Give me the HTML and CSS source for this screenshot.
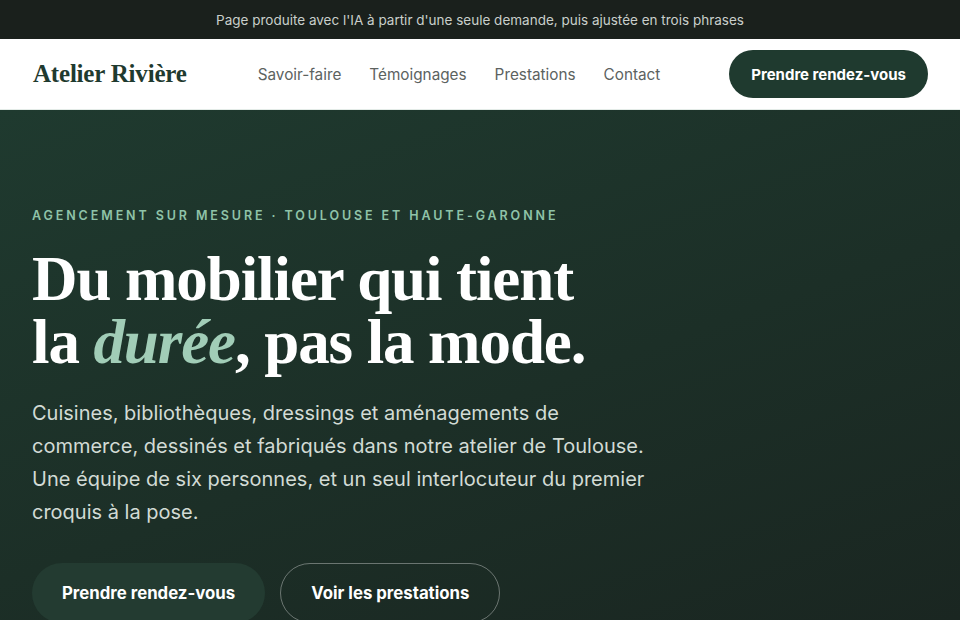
FILE: index.html
```html
<!DOCTYPE html>
<html lang="fr">
<head>
  <meta charset="utf-8">
  <title>Atelier Rivière — Agencement sur mesure</title>
  <link rel="stylesheet" href="styles.css">
</head>
<body>
  <div class="notice">Page produite avec l'IA à partir d'une seule demande, puis ajustée en trois phrases</div>

  <header class="topbar">
    <a class="logo" href="#">Atelier Rivière</a>
    <nav class="nav">
      <a href="#savoir-faire">Savoir-faire</a>
      <a href="#temoignages">Témoignages</a>
      <a href="#prestations">Prestations</a>
      <a href="#contact">Contact</a>
    </nav>
    <a class="btn btn-dark" href="#rdv">Prendre rendez-vous</a>
  </header>

  <section class="hero">
    <p class="eyebrow">Agencement sur mesure · Toulouse et Haute-Garonne</p>
    <h1>Du mobilier qui tient<br>la <em>durée</em>, pas la mode.</h1>
    <p class="lead">Cuisines, bibliothèques, dressings et aménagements de commerce, dessinés et fabriqués dans notre atelier de Toulouse. Une équipe de six personnes, et un seul interlocuteur du premier croquis à la pose.</p>
    <div class="actions">
      <a class="btn btn-soft" href="#rdv">Prendre rendez-vous</a>
      <a class="btn btn-ghost" href="#prestations">Voir les prestations</a>
    </div>
  </section>
</body>
</html>
```

FILE: styles.css
```css
* {
  box-sizing: border-box;
}

body {
  margin: 0;
  font-family: Inter, "Noto Sans", sans-serif;
  background: #1c2b24;
  color: #1f3a2f;
}

a {
  text-decoration: none;
  color: inherit;
}

.notice {
  height: 39px;
  display: flex;
  align-items: center;
  justify-content: center;
  background: #1a201c;
  color: #c9cfcb;
  font-size: 13.5px;
}

.topbar {
  height: 71px;
  display: flex;
  align-items: center;
  padding: 0 32px 0 33px;
  background: #fff;
  border-bottom: 1px solid #e3ebe7;
}

.logo {
  font-family: "Liberation Serif", serif;
  font-weight: 700;
  font-size: 25px;
  color: #1f3a2f;
  letter-spacing: -0.2px;
}

.nav {
  display: flex;
  gap: 28px;
  margin-left: 71px;
  font-size: 15.3px;
  color: #5c625f;
}

.btn {
  display: inline-flex;
  align-items: center;
  justify-content: center;
  border-radius: 999px;
  font-weight: 700;
  font-size: 16.8px;
}

.btn-dark {
  margin-left: auto;
  height: 48px;
  padding: 0 22px;
  font-size: 15px;
  background: #1f3a2f;
  color: #fff;
}

.hero {
  height: 510px;
  padding: 98px 32px 0 32px;
  background: linear-gradient(160deg, #1f3a2f 0%, #1c2f27 55%, #1a2621 100%);
  overflow: hidden;
}

.eyebrow {
  margin: 0;
  font-size: 12.5px;
  font-weight: 600;
  letter-spacing: 2.9px;
  text-transform: uppercase;
  color: #8fc3a8;
}

h1 {
  margin: 25px 0 0 0;
  font-family: "Liberation Serif", serif;
  font-weight: 700;
  font-size: 63px;
  line-height: 63px;
  letter-spacing: -1.1px;
  color: #fff;
}

h1 em {
  color: #a1cdb7;
}

.lead {
  margin: 23px 0 0 0;
  max-width: 618px;
  font-size: 20px;
  line-height: 33px;
  color: #d2dbd5;
}

.actions {
  display: flex;
  gap: 15px;
  margin-top: 34px;
}

.btn-soft {
  height: 60px;
  padding: 0 30px;
  background: #233b31;
  color: #fff;
}

.btn-ghost {
  height: 60px;
  padding: 0 30px;
  border: 1px solid rgba(255, 255, 255, 0.35);
  color: #fff;
}
```
